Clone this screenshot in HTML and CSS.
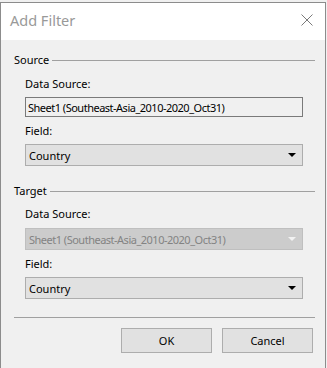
FILE: index.html
```html
<!DOCTYPE html>
<html>
<head>
<title>Add Filter</title>
<meta http-equiv="Content-Type" content="text/html; charset=utf-8" />
<link rel="stylesheet" href="styles.css">
</head>
<body>
<div class="win">
	<div class="title">
		<span class="caption">Add Filter</span>
		<svg class="close" width="12" height="12" viewBox="0 0 12 12"><path d="M0.5 0.5L11.5 11.5M11.5 0.5L0.5 11.5" stroke="#7a7a7a" stroke-width="1" fill="none"/></svg>
	</div>
	<div class="body">
		<div class="group">
			<div class="legend"><span>Source</span><i></i></div>
			<div class="label first">Data Source:</div>
			<div class="textbox"><span class="long">Sheet1 (Southeast-Asia_2010-2020_Oct31)</span></div>
			<div class="label">Field:</div>
			<div class="combo"><span>Country</span><b class="arrow"></b></div>
		</div>
		<div class="group target">
			<div class="legend"><span>Target</span><i></i></div>
			<div class="label first">Data Source:</div>
			<div class="combo disabled"><span class="long">Sheet1 (Southeast-Asia_2010-2020_Oct31)</span><b class="arrow"></b></div>
			<div class="label">Field:</div>
			<div class="combo"><span>Country</span><b class="arrow"></b></div>
		</div>
		<div class="sep"></div>
		<div class="buttons">
			<div class="btn">OK</div>
			<div class="btn">Cancel</div>
		</div>
	</div>
</div>
</body>
</html>
```

FILE: styles.css
```css
* {margin:0;padding:0;box-sizing:border-box;}
html,body {height:100%;overflow:hidden;}
body {background:#f0f0f0;font-family:"Noto Sans","Liberation Sans",sans-serif;font-size:11px;color:#000;padding-top:2px;}
.win {width:326px;height:366px;border:1px solid #8c8c8c;border-bottom:0;background:#f0f0f0;}
.title {height:37px;background:#fff;display:flex;align-items:center;justify-content:space-between;padding:0 12px 0 9px;}
.caption {font-size:14.5px;color:#999;margin-top:-3px;}
.close {margin-top:-4px;}
.body {padding:12px 10px 0 13px;}
.legend {display:flex;align-items:center;height:16px;line-height:16px;}
.legend span {padding-right:3px;}
.legend i {flex:1;height:1px;background:#a0a0a0;margin-top:1px;}
.target {margin-top:17px;}
.label {height:16px;line-height:16px;margin:6px 0 5px 11px;}
.label.first {margin-top:8px;}
.target .label.first {margin-top:7px;margin-bottom:6px;}
.target .label {margin-top:6px;}
.textbox,.combo {margin-left:11px;width:278px;display:flex;align-items:center;white-space:nowrap;}
.textbox {height:20px;border:1px solid #7a7a7a;padding-left:2px;}
.long {letter-spacing:-0.5px;}
.combo {height:22px;border:1px solid #adadad;background:#e1e1e1;padding:0 6px 0 3px;justify-content:space-between;}
.arrow {width:0;height:0;border-left:4px solid transparent;border-right:4px solid transparent;border-top:4px solid #000;}
.combo.disabled {background:#cccccc;border-color:#bfbfbf;color:#838383;}
.combo.disabled .arrow {border-top-color:#f2f2f2;}
.sep {height:1px;background:#a0a0a0;margin-top:18px;}
.buttons {display:flex;justify-content:flex-end;gap:10px;margin-top:10px;padding-right:2px;}
.btn {width:91px;height:25px;border:1px solid #adadad;background:#e1e1e1;display:flex;align-items:center;justify-content:center;}
```
